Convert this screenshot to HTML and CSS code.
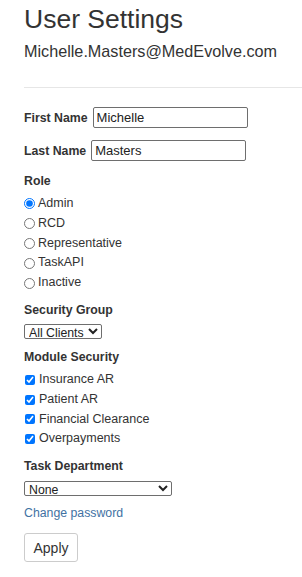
FILE: index.html
```html
<!DOCTYPE html>
<html lang="en">

<head>
    <meta charset="UTF-8">
    <meta name="viewport" content="width=device-width, initial-scale=1.0">
    <title>User Settings</title>
    <link rel="stylesheet" href="styles.css">
</head>

<body>
    <div class="page">
        <h2 class="title">User Settings</h2>
        <div class="email">Michelle.Masters@MedEvolve.com</div>
        <hr class="divider">

        <form class="settings-form">
            <div class="name-row">
                <label for="first-name" class="field-label">First Name</label>
                <input type="text" id="first-name" class="text-input" value="Michelle">
            </div>
            <div class="name-row">
                <label for="last-name" class="field-label">Last Name</label>
                <input type="text" id="last-name" class="text-input" value="Masters">
            </div>

            <div class="group-label">Role</div>
            <div class="options">
                <label class="option"><input type="radio" name="role" value="admin" checked> Admin</label>
                <label class="option"><input type="radio" name="role" value="rcd"> RCD</label>
                <label class="option"><input type="radio" name="role" value="rep"> Representative</label>
                <label class="option"><input type="radio" name="role" value="taskapi"> TaskAPI</label>
                <label class="option"><input type="radio" name="role" value="inactive"> Inactive</label>
            </div>

            <label for="security-group" class="group-label">Security Group</label>
            <select id="security-group" class="select select-short">
                <option>All Clients</option>
            </select>

            <div class="group-label">Module Security</div>
            <div class="options">
                <label class="option"><input type="checkbox" checked> Insurance AR</label>
                <label class="option"><input type="checkbox" checked> Patient AR</label>
                <label class="option"><input type="checkbox" checked> Financial Clearance</label>
                <label class="option"><input type="checkbox" checked> Overpayments</label>
            </div>

            <label for="task-dept" class="group-label">Task Department</label>
            <select id="task-dept" class="select select-wide">
                <option>None</option>
            </select>

            <a href="#" class="change-password">Change password</a>

            <button type="button" class="apply-btn">Apply</button>
        </form>
    </div>
</body>

</html>
```

FILE: styles.css
```css
body {
    margin: 0;
    font-family: "Liberation Sans", Arial, sans-serif;
    color: #333;
}

.page {
    padding-left: 24px;
}

.title {
    margin: 5px 0 0;
    font-size: 26.5px;
    font-weight: normal;
    line-height: 28px;
}

.email {
    margin-top: 7px;
    font-size: 16.2px;
    line-height: 22px;
}

.divider {
    margin: 25px 0 0;
    border: 0;
    border-top: 1px solid #e6e6e6;
}

.settings-form {
    display: flex;
    flex-direction: column;
    align-items: flex-start;
    padding-top: 19px;
    font-size: 12.3px;
}

.name-row {
    display: flex;
    align-items: center;
    gap: 5px;
    margin-bottom: 12px;
}

.name-row + .name-row {
    margin-bottom: 11px;
}

.field-label,
.group-label {
    font-weight: bold;
    line-height: 18px;
}

.group-label {
    display: block;
}

.text-input {
    box-sizing: border-box;
    width: 155px;
    height: 21px;
    margin: 0;
    padding: 0 3px;
    border: 1px solid #6e6e6e;
    border-radius: 2px;
    font-family: inherit;
    font-size: 13px;
    color: #222;
}

.options {
    display: flex;
    flex-direction: column;
    margin: 4px 0 8px;
}

.option {
    display: flex;
    align-items: center;
    height: 19.8px;
    line-height: 19.8px;
    font-size: 12.5px;
}

.option input {
    margin: 0 3px 0 0;
}

.option input[type="radio"] {
    width: 11px;
    height: 11px;
}

.option input[type="checkbox"] {
    width: 10px;
    height: 10px;
    margin: 0 4px 0 1px;
}

.select {
    box-sizing: border-box;
    height: 15px;
    margin: 5px 0 9px;
    padding: 0;
    border: 1px solid #6e6e6e;
    border-radius: 2px;
    font-family: inherit;
    font-size: 12.3px;
    color: #222;
    background: #fff;
}

.select-short {
    width: 78px;
}

.select-wide {
    width: 148px;
    margin-top: 6px;
    margin-bottom: 8px;
}

.change-password {
    line-height: 18px;
    color: #3f72a3;
    text-decoration: none;
}

.apply-btn {
    margin-top: 11px;
    width: 54px;
    height: 29px;
    padding: 0;
    border: 1px solid #ccc;
    border-radius: 3px;
    background: #fff;
    font-family: inherit;
    font-size: 14px;
    color: #333;
}
```
